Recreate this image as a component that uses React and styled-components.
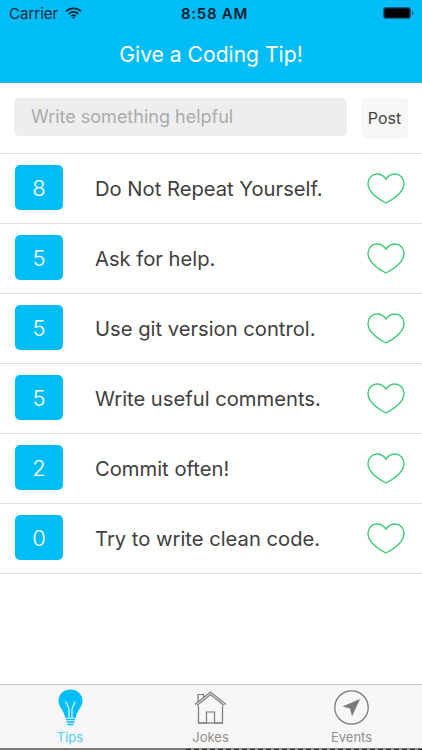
import * as React from "react";
import styled, { createGlobalStyle } from "styled-components";

const tips = [
  { id: 1, score: 8, text: "Do Not Repeat Yourself." },
  { id: 2, score: 5, text: "Ask for help." },
  { id: 3, score: 5, text: "Use git version control." },
  { id: 4, score: 5, text: "Write useful comments." },
  { id: 5, score: 2, text: "Commit often!" },
  { id: 6, score: 0, text: "Try to write clean code." },
];

const GlobalStyle = createGlobalStyle`
  html, body {
    margin: 0;
    padding: 0;
    background: #fff;
  }
  * {
    box-sizing: border-box;
  }
`;

const Screen = styled.div`
  width: 422px;
  height: 750px;
  display: flex;
  flex-direction: column;
  overflow: hidden;
  background: #fff;
  font-family: Inter, "Liberation Sans", sans-serif;
`;

const Header = styled.header`
  height: 83px;
  flex: none;
  background: #00bdf8;
  border-bottom: 1px solid #2ab0dc;
  display: flex;
  flex-direction: column;
`;

const StatusBar = styled.div`
  height: 26px;
  padding: 0 8px 0 9px;
  display: grid;
  grid-template-columns: 1fr auto 1fr;
  align-items: center;
  color: #06283a;
  font: 400 15px Inter, "Liberation Sans", sans-serif;
`;

const StatusLeft = styled.div`
  display: flex;
  align-items: center;
  gap: 7px;
`;

const Clock = styled.div`
  padding-left: 6px;
  font-weight: 600;
  font-size: 15px;
  letter-spacing: 0.7px;
  color: #041c2a;
`;

const BatteryWrap = styled.div`
  justify-self: end;
  display: flex;
`;

const Title = styled.h1`
  margin: 0;
  flex: 1;
  display: flex;
  align-items: center;
  justify-content: center;
  color: #fff;
  font: 400 21.1px Inter, "Liberation Sans", sans-serif;
`;

const Composer = styled.div`
  height: 71px;
  flex: none;
  display: flex;
  align-items: center;
  padding: 0 14px;
  gap: 14px;
  border-bottom: 1px solid #e0e0e0;
`;

const Field = styled.div`
  flex: 1;
  height: 38px;
  border-radius: 5px;
  background: #eeeeee;
  color: #ababab;
  font: 400 18px Inter, "Liberation Sans", sans-serif;
  padding: 0 17px 2px;
  display: flex;
  align-items: center;
  margin-top: -2px;
`;

const PostButton = styled.div`
  width: 47px;
  height: 41px;
  border-radius: 5px;
  background: #f7f7f7;
  color: #444;
  font: 400 16px Inter, "Liberation Sans", sans-serif;
  display: flex;
  align-items: center;
  justify-content: center;
`;

const TipRow = styled.div`
  height: 70px;
  flex: none;
  display: flex;
  align-items: center;
  padding: 0 17px 0 15px;
  border-bottom: 1px solid #e0e0e0;
`;

const Score = styled.div`
  width: 48px;
  height: 45px;
  margin-top: -2px;
  border-radius: 5px;
  background: #00bdf8;
  color: #fff;
  font: 300 22px Inter, "Liberation Sans", sans-serif;
  display: flex;
  align-items: center;
  justify-content: center;
`;

const TipText = styled.div`
  flex: 1;
  margin-left: 32px;
  color: #404040;
  font: 400 20.2px Inter, "Liberation Sans", sans-serif;
`;

const Spacer = styled.div`
  flex: 1;
`;

const TabBar = styled.nav`
  height: 66px;
  flex: none;
  background: #f7f7f7;
  border-top: 1px solid #c8c8c8;
  display: flex;
  flex-direction: column;
`;

const TabList = styled.div`
  flex: 1;
  display: grid;
  grid-template-columns: 140px 141px 141px;
`;

const Tab = styled.div`
  display: flex;
  flex-direction: column;
  align-items: center;
  padding-top: 4px;
  line-height: 15px;
  color: ${(p) => (p.$active ? "#4fcdf6" : "#8e8e8e")};
  font-size: 13px;
`;

const TabIcon = styled.div`
  height: 37px;
  margin-bottom: 4px;
  display: flex;
  align-items: center;
  justify-content: center;
`;

const BottomEdge = styled.div`
  height: 2px;
  flex: none;
  background: repeating-linear-gradient(90deg, #222 0 5px, #aaa 5px 8px) 186px 1px / 236px 1px no-repeat, #7a7a7a;
`;

function WifiIcon() {
  return (
    <svg width="17" height="12" viewBox="0 0 17 12" fill="none" stroke="#06283a" strokeWidth="1.7">
      <path d="M1 4.2C5.2 0.3 11.8 0.3 16 4.2" />
      <path d="M3.6 6.8C6.4 4.2 10.6 4.2 13.4 6.8" />
      <path d="M6.1 9.1C7.5 7.9 9.5 7.9 10.9 9.1" />
      <path d="M8.5 12L6.9 10.3C7.8 9.6 9.2 9.6 10.1 10.3Z" fill="#06283a" stroke="none" />
    </svg>
  );
}

function BatteryIcon() {
  return (
    <svg width="31" height="12" viewBox="0 0 31 12">
      <rect x="0.5" y="0.5" width="27" height="11" rx="2.5" fill="#06283a" stroke="#1f5f7c" />
      <rect x="2" y="2" width="24" height="8" rx="1" fill="#000" />
      <path d="M29 4C30 4.2 30.6 5 30.6 6C30.6 7 30 7.8 29 8Z" fill="#1f5f7c" />
    </svg>
  );
}

function HeartIcon() {
  return (
    <svg width="38" height="31" viewBox="0 0 38 31" fill="none" stroke="#3ecb75" strokeWidth="1.4">
      <path d="M19 6.2C16.6 2.6 13.6 1 10.2 1C5 1 1 5 1 10.2C1 18.5 9.5 25 19 30C28.5 25 37 18.5 37 10.2C37 5 33 1 27.8 1C24.4 1 21.4 2.6 19 6.2Z" />
    </svg>
  );
}

function BulbIcon() {
  return (
    <svg width="25" height="37" viewBox="0 0 25 37">
      <path d="M12.5 0.5C5.6 0.5 0.5 5.4 0.5 11.8C0.5 18 6 21.5 7.3 28.8H17.7C19 21.5 24.5 18 24.5 11.8C24.5 5.4 19.4 0.5 12.5 0.5Z" fill="#00bdf8" />
      <path d="M7.8 12.5L11 19.5V28.8M17.2 12.5L14 19.5V28.8" fill="none" stroke="#f7f7f7" strokeWidth="1.1" />
      <path d="M8 30.5H17M8.5 33H16.5M9.5 35.5H15.5" fill="none" stroke="#00bdf8" strokeWidth="1.3" />
    </svg>
  );
}

function HouseIcon() {
  return (
    <svg width="33" height="33" viewBox="0 0 33 33" fill="none" stroke="#7a7a7a" strokeWidth="1.2">
      <path d="M1 13.5L16.5 1L32 13.5" />
      <path d="M3 14.5L16.5 3.6L30 14.5" />
      <path d="M4 11V3.5H9.5V6.5" />
      <path d="M4.5 15V32H12.5V21H20.5V32H28.5V15" />
      <path d="M4.5 32H28.5" />
    </svg>
  );
}

function NavigationIcon() {
  return (
    <svg width="35" height="35" viewBox="0 0 35 35">
      <circle cx="17.5" cy="17.5" r="16.7" fill="none" stroke="#7a7a7a" strokeWidth="1.3" />
      <path d="M26 9L8.5 16.6L16 18.4L18 26.5Z" fill="#7a7a7a" />
    </svg>
  );
}

export default function App() {
  return (
    <Screen>
      <GlobalStyle />
      <Header>
        <StatusBar>
          <StatusLeft>
            Carrier
            <WifiIcon />
          </StatusLeft>
          <Clock>8:58 AM</Clock>
          <BatteryWrap>
            <BatteryIcon />
          </BatteryWrap>
        </StatusBar>
        <Title>Give a Coding Tip!</Title>
      </Header>
      <Composer>
        <Field>Write something helpful</Field>
        <PostButton>Post</PostButton>
      </Composer>
      {tips.map((tip) => (
        <TipRow key={tip.id}>
          <Score>{tip.score}</Score>
          <TipText>{tip.text}</TipText>
          <HeartIcon />
        </TipRow>
      ))}
      <Spacer />
      <TabBar>
        <TabList>
          <Tab $active>
            <TabIcon>
              <BulbIcon />
            </TabIcon>
            Tips
          </Tab>
          <Tab>
            <TabIcon>
              <HouseIcon />
            </TabIcon>
            Jokes
          </Tab>
          <Tab>
            <TabIcon>
              <NavigationIcon />
            </TabIcon>
            Events
          </Tab>
        </TabList>
        <BottomEdge />
      </TabBar>
    </Screen>
  );
}
